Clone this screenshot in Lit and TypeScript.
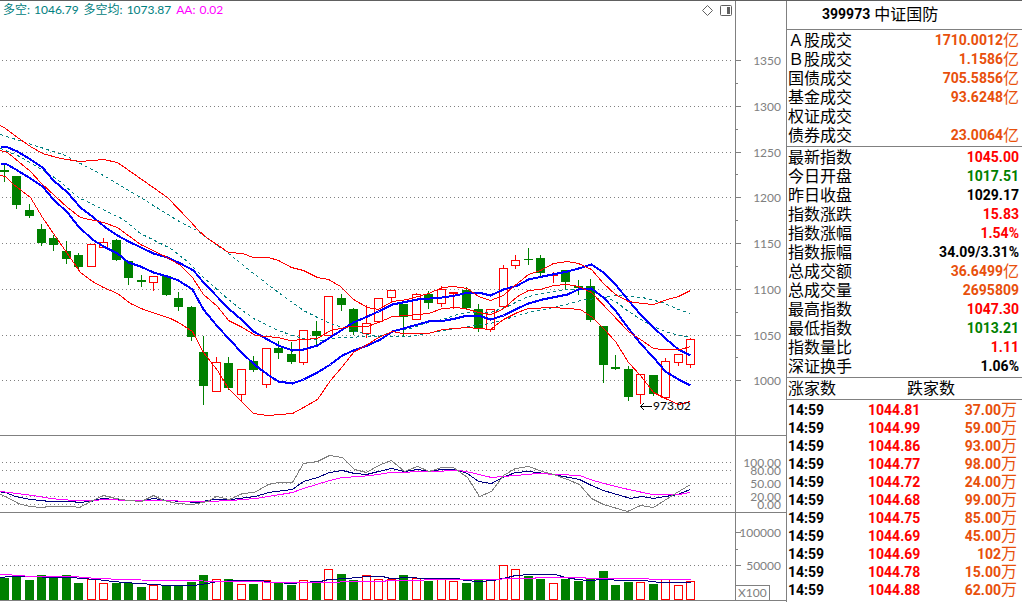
import { LitElement, html, svg, css } from "lit";
import { customElement } from "lit/decorators.js";

type Candle = [up: number, high: number, top: number, bottom: number, low: number];

const FIRST_BAR = 3.528;
const PITCH = 12.486;
const barX = (i: number) => Math.round(FIRST_BAR + i * PITCH);

/* up flag, then high / body top / body bottom / low on the plot's vertical scale */
const CANDLES: Candle[] = [
  [0, 162, 170, 172, 181], [0, 175, 176, 205, 208], [0, 203, 210, 216, 217], [0, 223, 229, 243, 245],
  [0, 234, 238, 245, 250], [0, 240, 251, 259, 263], [0, 252, 255, 267, 268], [1, 244, 244, 266, 266],
  [1, 237, 242, 247, 247], [0, 238, 240, 260, 260], [0, 261, 261, 278, 284], [0, 274, 280, 282, 286],
  [1, 276, 276, 282, 290], [0, 276, 276, 295, 295], [0, 291, 298, 307, 310], [0, 305, 307, 337, 340],
  [0, 335, 352, 386, 404], [1, 356, 362, 391, 391], [0, 356, 363, 388, 389], [1, 369, 369, 394, 400],
  [0, 355, 361, 370, 371], [1, 348, 348, 384, 387], [0, 340, 348, 353, 358], [0, 341, 354, 362, 363],
  [1, 330, 330, 362, 364], [0, 320, 331, 336, 344], [1, 296, 296, 335, 335], [0, 293, 298, 305, 310],
  [0, 307, 309, 332, 334], [1, 304, 323, 333, 337], [1, 298, 298, 321, 321], [1, 290, 290, 297, 301],
  [0, 304, 304, 317, 336], [1, 292, 294, 319, 319], [0, 290, 294, 303, 308], [1, 285, 289, 303, 306],
  [1, 292, 292, 293, 308], [0, 286, 290, 308, 308], [0, 303, 309, 328, 331], [1, 308, 309, 329, 331],
  [1, 264, 268, 306, 306], [1, 254, 260, 265, 268], [0, 247, 259, 260, 264], [0, 254, 258, 273, 276],
  [1, 271, 274, 275, 282], [0, 269, 270, 282, 289], [0, 279, 286, 288, 294], [0, 278, 286, 320, 321],
  [0, 326, 326, 365, 382], [0, 354, 367, 369, 369], [0, 365, 369, 397, 400], [1, 374, 374, 394, 403],
  [0, 375, 375, 394, 395], [1, 357, 361, 397, 397], [1, 354, 354, 362, 365], [1, 337, 339, 364, 367],
];

const VOLUME_TOPS = [
  578, 575, 580, 575, 577, 575, 583, 579, 583, 583, 583, 587, 585, 585, 586, 582, 575, 579, 579, 584,
  584, 580, 583, 585, 580, 583, 569, 574, 580, 575, 579, 579, 575, 578, 581, 579, 581, 583, 580, 579,
  565, 569, 576, 579, 583, 579, 581, 579, 571, 585, 582, 582, 584, 579, 585, 581,
];

const BAND_UPPER = "0,125 5,128 17,137 30,146 42,153 60,158 80,161 103,159 117,162 167,197 189,220 198,230 206,237 228,252 242,253 253,257 268,257 278,260 291,267 303,270 317,277 328,279 340,286 353,299 367,307 378,309 392,301 407,299 428,293 442,287 453,286 467,288 478,296 490,300 503,295 512,287 528,274 540,270 553,263 567,261 578,263 591,269 603,283 615,294 628,301 642,303 653,304 667,299 678,296 690,290";
const BAND_MIDDLE = "0,150 7,152 30,171 40,182 55,196 67,207 80,217 103,222 117,227 140,244 165,256 180,265 192,277 203,294 217,306 228,320 242,327 255,335 277,337 290,340 303,339 317,338 330,330 350,326 367,326 378,322 392,316 408,315 428,313 442,308 457,307 468,309 478,312 490,314 502,309 517,296 528,290 540,289 553,285 567,284 578,286 591,292 628,331 640,339 653,348 662,349 680,349 690,346";
const BAND_LOWER = "0,175 5,176 13,184 30,197 42,217 55,236 80,272 92,281 103,287 117,293 130,303 143,309 170,318 178,322 192,331 203,352 217,370 228,388 240,400 253,413 267,415 292,413 303,407 317,399 330,380 342,366 353,352 367,344 378,337 392,331 402,333 428,333 442,329 467,327 490,329 503,319 517,312 528,308 553,307 580,309 592,317 603,328 615,341 628,362 640,375 653,392 667,399 678,404 690,401";
const TREND_UPPER = "0,146 5,146 17,151 30,159 42,167 53,180 67,192 80,207 93,217 105,227 117,235 128,241 153,253 167,257 180,263 193,270 203,282 228,308 242,320 253,331 267,339 278,345 292,350 303,349 317,345 328,338 342,329 353,322 367,316 378,311 392,304 417,299 442,297 455,295 468,292 478,292 490,295 503,289 517,285 528,279 542,276 567,271 578,268 591,264 603,272 615,284 628,300 640,314 653,327 665,338 678,349 690,355";
const TREND_LOWER = "0,163 5,163 17,170 30,178 42,186 53,199 67,212 78,226 92,239 103,246 117,253 128,262 140,266 153,272 167,276 178,280 192,289 203,309 217,326 242,353 255,365 267,374 278,381 292,383 303,379 317,372 330,364 342,355 353,350 367,345 380,339 392,331 403,328 428,321 445,320 455,318 467,315 478,315 490,319 503,315 517,308 528,303 542,299 567,294 578,289 591,288 603,297 615,310 628,328 640,343 653,357 665,371 678,379 690,385";
const MEAN_UPPER = "0,134 25,142 65,155 78,162 105,176 140,197 177,220 198,231 210,240 228,253 253,273 278,292 303,310 317,317 330,323 352,330 367,334 380,336 410,336 428,333 455,328 468,326 490,323 528,312 558,306 580,300 603,297 617,295 642,297 662,302 678,309 690,313";
const MEAN_LOWER = "0,148 17,155 33,164 57,179 78,197 123,219 140,233 170,248 187,261 203,277 228,299 242,310 253,318 278,330 292,335 303,338 320,340 340,337 373,336 382,335 392,331 410,328 428,322 442,319 457,314 468,312 490,312 507,306 517,301 528,296 542,293 567,289 592,289 603,296 615,301 628,311 642,320 653,326 667,332 690,337";

const OSC_FAST = "0,494 5,496 18,503 29,506 42,507 48,506 72,506 79,507 90,501 103,495 115,498 128,500 141,501 153,495 163,500 177,503 192,504 207,501 216,496 229,499 242,493 254,492 268,484 278,482 292,482 303,463 317,461 329,455 342,457 354,469 366,472 378,465 391,460 404,471 417,466 429,471 441,467 453,467 467,477 479,496 491,491 503,475 515,468 528,466 542,471 553,474 567,479 579,484 591,498 603,504 627,511 640,505 653,507 675,493 690,484";
const OSC_MID = "0,492 5,492 15,496 30,499 50,501 72,501 78,502 90,501 102,498 128,500 142,500 153,498 167,500 197,502 213,499 230,499 255,496 268,492 292,489 303,481 317,477 329,472 342,470 354,473 366,474 378,471 391,468 404,471 417,469 429,471 441,469 455,469 467,473 478,481 491,483 502,477 515,472 528,471 553,474 579,479 591,485 603,490 630,498 642,496 653,498 677,494 690,489";
const OSC_SLOW = "0,491 8,492 33,495 50,498 73,500 90,500 107,499 128,500 147,500 167,500 187,501 207,501 230,500 255,498 268,496 292,492 303,488 329,480 342,477 360,476 378,474 390,472 430,471 458,470 470,472 491,477 515,475 537,473 558,474 579,475 590,479 603,483 628,489 652,494 678,494 690,492";

const VOL_SHORT = "0,577 10,576 33,576 50,577 72,577 80,578 97,579 103,580 123,582 140,583 167,585 193,585 207,583 217,581 237,580 260,580 273,582 293,583 300,582 320,581 328,579 347,578 367,576 382,576 390,578 410,577 423,578 457,578 465,580 478,581 493,580 507,577 515,575 530,574 555,574 565,577 577,579 588,580 603,579 623,580 643,580 660,582 690,582";
const VOL_LONG = "0,574 22,575 27,576 72,576 97,578 123,579 158,580 247,581 280,582 330,582 350,581 383,581 387,580 422,580 425,579 497,579 507,578 533,578 537,577 583,577 587,578 647,578 650,579 690,579";

const AREA = { price: [1, 434], osc: [436, 76], volume: [513, 87] } as const;
type Area = keyof typeof AREA;

const priceY = (price: number) => Math.round(60 + ((1350 - price) * 915) / 1000);
const PRICES = [1350, 1300, 1250, 1200, 1150, 1100, 1050, 1000];

interface Mark { y: number; label?: string; minor?: boolean }
const AXES: Record<Area, Mark[]> = {
  price: [
    ...PRICES.map((p) => ({ y: priceY(p), label: String(p) })),
    ...PRICES.slice(0, -1).map((p) => ({ y: priceY(p - 25), minor: true })),
  ],
  osc: [[462, "100.00"], [470, "80.00"], [483, "50.00"], [496, "20.00"], [504, "0.00"]].map(
    ([y, label]) => ({ y: y as number, label: label as string }),
  ),
  volume: [{ y: 532, label: "100000" }, { y: 549, minor: true }, { y: 565, label: "50000" }],
};

const TURNOVER = [
  ["Ａ股成交", "1710.0012", "亿"], ["Ｂ股成交", "1.1586", "亿"], ["国债成交", "705.5856", "亿"],
  ["基金成交", "93.6248", "亿"], ["权证成交", "", ""], ["债券成交", "23.0064", "亿"],
];

const QUOTES = [
  ["最新指数", "1045.00", "", "up"], ["今日开盘", "1017.51", "", "down"], ["昨日收盘", "1029.17", "", "flat"],
  ["指数涨跌", "15.83", "", "up"], ["指数涨幅", "1.54%", "", "up"], ["指数振幅", "34.09/3.31%", "", "flat"],
  ["总成交额", "36.6499", "亿", "amount"], ["总成交量", "2695809", "", "amount"], ["最高指数", "1047.30", "", "up"],
  ["最低指数", "1013.21", "", "down"], ["指数量比", "1.11", "", "up"], ["深证换手", "1.06%", "", "flat"],
];

const TICKS = [
  ["1044.81", "37.00"], ["1044.99", "59.00"], ["1044.86", "93.00"], ["1044.77", "98.00"],
  ["1044.72", "24.00"], ["1044.68", "99.00"], ["1044.75", "85.00"], ["1044.69", "45.00"],
  ["1044.69", "102"], ["1044.78", "15.00"], ["1044.88", "62.00"],
];

const line = (points: string, cls: string) => svg`<polyline class="line ${cls}" points=${points} />`;

@customElement("stock-chart")
class StockChart extends LitElement {
  static styles = css`
    :host {
      display: grid;
      grid-template-rows: 435fr 77fr 88fr;
      min-width: 0;
      font: 12px/16px Lato, "Noto Sans CJK SC", sans-serif;
    }
    .pane {
      display: grid;
      grid-template-columns: minmax(0, 1fr) 51px;
      min-height: 0;
      border-bottom: 1px solid #808080;
      position: relative;
    }
    .plot { position: relative; min-height: 0; }
    .axis { position: relative; min-height: 0; border-left: 1px solid #808080; }
    svg.fill { display: block; width: 100%; height: 100%; overflow: hidden; position: absolute; inset: 0; }
    .line { fill: none; stroke-width: 1px; vector-effect: non-scaling-stroke; }
    .grid { stroke: #808080; stroke-dasharray: 1 3; }
    .red { stroke: #f00; }
    .blue { stroke: #00f; stroke-width: 2px; }
    .teal { stroke: #008080; stroke-dasharray: 3 3; }
    .gray { stroke: #808080; }
    .navy { stroke: #000080; }
    .magenta { stroke: #f0f; }
    .rise { fill: #fff; stroke: #f00; }
    .rise-wick { stroke: #f00; }
    .fall { fill: #008000; stroke: #008000; }
    .fall-wick { stroke: #008000; }
    .label { fill: #808080; text-anchor: end; }
    .legend {
      position: absolute;
      inset: 0 0 auto;
      display: flex;
      align-items: center;
      gap: 5px;
      height: 18px;
      padding: 0 3px;
      white-space: nowrap;
      color: #008080;
    }
    .pair { display: flex; gap: 4px; }
    .aa { color: #f0f; }
    .tools { display: flex; gap: 5px; margin-left: auto; }
    .tool { display: block; padding: 0; border: 0; background: none; width: 13px; height: 13px; }
    .tool svg { display: block; }
    .low {
      position: absolute;
      display: flex;
      align-items: center;
      gap: 1px;
      height: 14px;
      line-height: 14px;
      color: #000;
    }
    .unit {
      position: absolute;
      left: -1px;
      bottom: -1px;
      border: 1px solid #808080;
      background: #fff;
      color: #808080;
      padding: 0 2px;
      line-height: 14px;
    }
  `;

  private plot(area: Area, content: unknown) {
    const [top, height] = AREA[area];
    const marks = AXES[area].filter((m) => m.label && m.label !== "100000");
    return svg`<svg class="fill" viewBox="0 ${top} 735 ${height}" preserveAspectRatio="none" shape-rendering="crispEdges" aria-hidden="true">
      <g transform="translate(.5 .5)">
        ${marks.map((m) => svg`<line class="line grid" x1="1.5" x2="732" y1=${m.y} y2=${m.y} />`)}
        ${content}
      </g>
    </svg>`;
  }

  private axis(area: Area) {
    const [top, height] = AREA[area];
    const at = (y: number) => `${((y - top) / height) * 100}%`;
    return html`<svg class="fill" role="img" aria-label="axis">
      ${AXES[area].map((m) => svg`
        ${area === "osc" ? "" : svg`<line class="line gray" shape-rendering="crispEdges" x1="0" x2=${m.minor ? 2 : 5} y1=${at(m.y + 0.5)} y2=${at(m.y + 0.5)} />`}
        ${m.label ? svg`<text class="label" x="45" dy="5" y=${at(m.y)}>${m.label}</text>` : ""}
      `)}
    </svg>`;
  }

  private candle([up, high, top, bottom, low]: Candle, i: number) {
    const x = barX(i);
    const end = up ? bottom : bottom - 1;
    const wick = up ? "rise-wick" : "fall-wick";
    return svg`
      <line class="line ${wick}" x1=${x} x2=${x} y1=${high} y2=${low} />
      <rect class=${up ? "rise" : "fall"} x=${x - 4} y=${top} width="8" height=${Math.max(end - top, 0.01)} />
    `;
  }

  private volumeBar(top: number, i: number) {
    return svg`<rect class=${CANDLES[i][0] ? "rise" : "fall"} x=${barX(i) - 4} y=${top} width="8" height=${599 - top} />`;
  }

  render() {
    return html`
      <section class="pane">
        <div class="plot">
          ${this.plot("price", svg`
            ${CANDLES.map((c, i) => this.candle(c, i))}
            ${line(MEAN_UPPER, "teal")} ${line(MEAN_LOWER, "teal")}
            ${line(TREND_UPPER, "blue")} ${line(TREND_LOWER, "blue")}
            ${line(BAND_UPPER, "red")} ${line(BAND_MIDDLE, "red")} ${line(BAND_LOWER, "red")}
          `)}
          <div class="legend">
            <span class="pair"><span>多空:</span><span>1046.79</span></span>
            <span class="pair"><span>多空均:</span><span>1073.87</span></span>
            <span class="pair aa"><span>AA:</span><span>0.02</span></span>
            <span class="tools">
              <button class="tool" aria-label="标记">
                <svg width="13" height="13"><path d="M6.5 1.5l5 5-5 5-5-5z" fill="none" stroke="#606060" /></svg>
              </button>
              <button class="tool" aria-label="侧栏">
                <svg width="13" height="13"><rect x="1.5" y="1.5" width="11" height="10" rx="1" fill="none" stroke="#606060" /><path d="M8 3h3v7H8z" fill="#606060" /></svg>
              </button>
            </span>
          </div>
          <div class="low" style="left:${(640 / 735) * 100}%;top:${(398 / 434) * 100}%">
            <svg width="12" height="9"><path d="M0 4.5h12M4 1L.5 4.5 4 8" fill="none" stroke="#000" /></svg>
            <span>973.02</span>
          </div>
        </div>
        <div class="axis">${this.axis("price")}</div>
      </section>
      <section class="pane">
        <div class="plot">
          ${this.plot("osc", svg`${line(OSC_MID, "navy")} ${line(OSC_SLOW, "magenta")} ${line(OSC_FAST, "gray")}`)}
        </div>
        <div class="axis">${this.axis("osc")}</div>
      </section>
      <section class="pane">
        <div class="plot">
          ${this.plot("volume", svg`
            ${VOLUME_TOPS.map((t, i) => this.volumeBar(t, i))}
            ${line(VOL_SHORT, "navy")} ${line(VOL_LONG, "magenta")}
          `)}
        </div>
        <div class="axis">${this.axis("volume")}<span class="unit">X100</span></div>
      </section>
    `;
  }
}

@customElement("quote-panel")
class QuotePanel extends LitElement {
  static styles = css`
    :host {
      display: block;
      border-left: 1px solid #808080;
      color: #000;
      font: 16px/19px Roboto, "Noto Sans CJK SC", sans-serif;
      overflow: hidden;
      white-space: nowrap;
    }
    .head {
      display: flex;
      align-items: center;
      gap: 4px;
      box-sizing: border-box;
      height: 29px;
      margin: 0;
      padding: 0 0 2px 35px;
      border-bottom: 1px solid #808080;
      font-size: 16px;
      font-weight: 400;
    }
    .code, .num { font-size: 14px; font-weight: 700; }
    .block { padding: 1px 3px 1px 1px; border-bottom: 1px solid #808080; }
    table { width: 100%; border-collapse: collapse; table-layout: fixed; }
    th, td { padding: 0; height: 19px; line-height: 19px; font-weight: 400; }
    th { text-align: left; width: 80px; }
    td { text-align: right; }
    td > span { display: flex; justify-content: flex-end; height: 19px; }
    .amount { color: #e8500c; }
    .up { color: #f00; }
    .down { color: #008000; }
    .flat { color: #000; }
    .breadth {
      display: grid;
      grid-template-columns: 1fr 1fr;
      column-gap: 4px;
      box-sizing: border-box;
      height: 22px;
      line-height: 21px;
      padding-left: 1px;
      border-bottom: 1px solid #808080;
    }
    .ticks { padding: 1px 5px 0 1px; }
    .ticks td, .ticks td > span { height: 18px; line-height: 18px; }
    .ticks .time, .ticks .price { text-align: left; width: 80px; }
    .ticks .num { font-weight: 700; }
  `;

  private row([name, value, unit, tone = "amount"]: string[]) {
    return html`<tr>
      <th scope="row">${name}</th>
      <td class=${tone}><span><span class="num">${value}</span>${unit}</span></td>
    </tr>`;
  }

  render() {
    return html`
      <h1 class="head"><span class="code">399973</span><span>中证国防</span></h1>
      <div class="block"><table>${TURNOVER.map((r) => this.row(r))}</table></div>
      <div class="block"><table>${QUOTES.map((r) => this.row(r))}</table></div>
      <div class="breadth"><span>涨家数</span><span>跌家数</span></div>
      <div class="ticks">
        <table>
          ${TICKS.map(([price, size]) => html`<tr>
            <td class="time num">14:59</td>
            <td class="price num up">${price}</td>
            <td class="amount"><span><span class="num">${size}</span>万</span></td>
          </tr>`)}
        </table>
      </div>
    `;
  }
}

@customElement("app-root")
class AppRoot extends LitElement {
  static styles = css`
    :host {
      display: grid;
      grid-template-columns: minmax(0, 1fr) 236px;
      box-sizing: border-box;
      height: 100vh;
      min-height: 602px;
      border-top: 1px solid #606060;
      background: #fff;
      overflow: hidden;
    }
    .chart { margin-bottom: 1px; }
  `;

  render() {
    return html`<stock-chart class="chart"></stock-chart><quote-panel></quote-panel>`;
  }
}
